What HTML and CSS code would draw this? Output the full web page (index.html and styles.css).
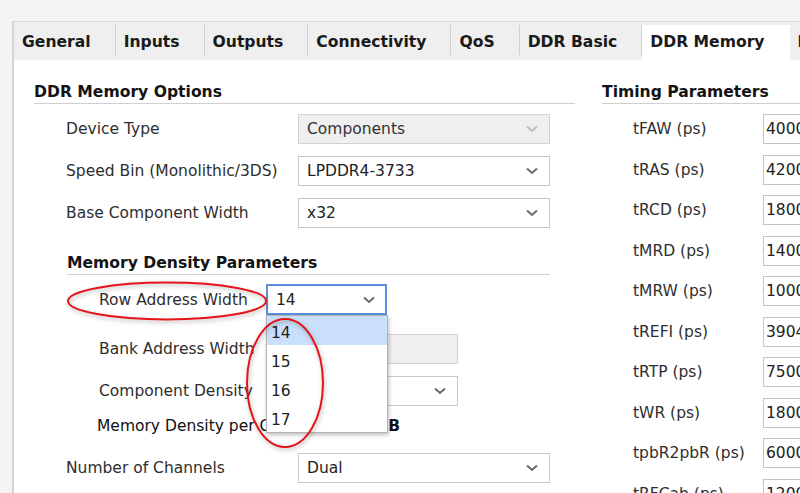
FILE: index.html
```html
<!DOCTYPE html>
<html>
<head>
<meta charset="utf-8">
<link rel="stylesheet" href="styles.css">
</head>
<body>
<div class="window">
  <div class="tabs">
    <div class="tab">General</div>
    <div class="tab">Inputs</div>
    <div class="tab">Outputs</div>
    <div class="tab">Connectivity</div>
    <div class="tab">QoS</div>
    <div class="tab">DDR Basic</div>
    <div class="tab active">DDR Memory</div>
    <div class="tab">DDR Advanced</div>
  </div>
  <div class="content">
    <div class="col-left">
      <div class="section-title">DDR Memory Options</div>
      <div class="row first">
        <span class="label">Device Type</span>
        <div class="select disabled"><span>Components</span><svg class="chev" width="12" height="8" viewBox="0 0 12 8"><polyline points="1,1.5 6,6 11,1.5"/></svg></div>
      </div>
      <div class="row">
        <span class="label">Speed Bin (Monolithic/3DS)</span>
        <div class="select"><span>LPDDR4-3733</span><svg class="chev" width="12" height="8" viewBox="0 0 12 8"><polyline points="1,1.5 6,6 11,1.5"/></svg></div>
      </div>
      <div class="row">
        <span class="label">Base Component Width</span>
        <div class="select"><span>x32</span><svg class="chev" width="12" height="8" viewBox="0 0 12 8"><polyline points="1,1.5 6,6 11,1.5"/></svg></div>
      </div>

      <div class="subsection">
        <div class="section-title sub-title">Memory Density Parameters</div>
        <div class="row sub-row row-addr">
          <span class="label sub-label">Row Address Width</span>
          <div class="select small focused"><span>14</span><svg class="chev" width="12" height="8" viewBox="0 0 12 8"><polyline points="1,1.5 6,6 11,1.5"/></svg>
            <ul class="dropdown">
              <li class="hl">14</li>
              <li>15</li>
              <li>16</li>
              <li>17</li>
            </ul>
          </div>
        </div>
        <div class="row sub-row row-bank">
          <span class="label sub-label">Bank Address Width</span>
          <div class="field disabled wide"><span>3</span></div>
        </div>
        <div class="row sub-row row-comp">
          <span class="label sub-label">Component Density</span>
          <div class="select wide"><span>8Gb</span><svg class="chev" width="12" height="8" viewBox="0 0 12 8"><polyline points="1,1.5 6,6 11,1.5"/></svg></div>
        </div>
        <div class="density-row">
          <span class="density-label">Memory Density per Channel</span>
          <span class="density-value">16GB</span>
        </div>
      </div>

      <div class="row channels">
        <span class="label">Number of Channels</span>
        <div class="select"><span>Dual</span><svg class="chev" width="12" height="8" viewBox="0 0 12 8"><polyline points="1,1.5 6,6 11,1.5"/></svg></div>
      </div>
    </div>

    <div class="col-right">
      <div class="section-title">Timing Parameters</div>
      <div class="timing-list">
        <div class="trow"><span class="tlabel">tFAW (ps)</span><div class="tinput">40000</div></div>
        <div class="trow"><span class="tlabel">tRAS (ps)</span><div class="tinput">42000</div></div>
        <div class="trow"><span class="tlabel">tRCD (ps)</span><div class="tinput">18000</div></div>
        <div class="trow"><span class="tlabel">tMRD (ps)</span><div class="tinput">14000</div></div>
        <div class="trow"><span class="tlabel">tMRW (ps)</span><div class="tinput">10000</div></div>
        <div class="trow"><span class="tlabel">tREFI (ps)</span><div class="tinput">3904000</div></div>
        <div class="trow"><span class="tlabel">tRTP (ps)</span><div class="tinput">7500</div></div>
        <div class="trow"><span class="tlabel">tWR (ps)</span><div class="tinput">18000</div></div>
        <div class="trow"><span class="tlabel">tpbR2pbR (ps)</span><div class="tinput">60000</div></div>
        <div class="trow"><span class="tlabel">tRFCab (ps)</span><div class="tinput">120000</div></div>
      </div>
    </div>
  </div>
</div>

<svg class="annot" width="800" height="493" viewBox="0 0 800 493">
  <ellipse cx="167" cy="301" rx="99" ry="18.5"/>
  <ellipse cx="285" cy="383" rx="38" ry="64"/>
</svg>
</body>
</html>
```

FILE: styles.css
```css
* { box-sizing: border-box; }

html, body {
  margin: 0;
  padding: 0;
}

body {
  width: 800px;
  height: 493px;
  overflow: hidden;
  background: #f4f4f4;
  font-family: "DejaVu Sans", sans-serif;
  font-size: 15.5px;
  color: #2e2e2e;
  position: relative;
}

.window {
  margin: 21px 0 0 12px;
  border-top: 1px solid #d9d9d9;
  border-left: 2px solid #d4d4d4;
  background: #ffffff;
  height: 472px;
  overflow: hidden;
}

/* Tabs */
.tabs {
  display: flex;
  align-items: flex-end;
  height: 38px;
  background: #efefef;
  white-space: nowrap;
}

.tab {
  position: relative;
  height: 35px;
  line-height: 34px;
  padding: 0 25px 0 8px;
  font-weight: bold;
  font-size: 15.6px;
  color: #1a1a1a;
  flex: none;
}

.tab + .tab::before {
  content: "";
  position: absolute;
  left: -1px;
  top: 0;
  height: 30px;
  border-left: 1px solid #cfcfcf;
}

.tab.active {
  background: #ffffff;
}

.tab.active + .tab::before {
  display: none;
}

/* Content */
.content {
  display: flex;
  gap: 27px;
  padding: 22px 0 0 20px;
}

.col-left {
  width: 541px;
  flex: none;
}

.col-right {
  flex: 1;
  min-width: 0;
}

.section-title {
  font-weight: bold;
  font-size: 15.6px;
  color: #141414;
  line-height: 20px;
  padding-bottom: 1px;
  border-bottom: 1px solid #d0d0d0;
  white-space: nowrap;
}

.row {
  display: flex;
  align-items: center;
  height: 30px;
  padding-left: 32px;
  margin-top: 12px;
}

.row.first {
  margin-top: 10px;
}

.label {
  width: 232px;
  flex: none;
  white-space: nowrap;
}

.select, .field {
  position: relative;
  width: 252px;
  height: 30px;
  border: 1px solid #c9c9c9;
  background: #ffffff;
  display: flex;
  align-items: center;
  justify-content: space-between;
  padding: 0 11px 0 8px;
  color: #222;
}

.select.disabled, .field.disabled {
  background: #efefef;
  border-color: #d2d2d2;
  color: #333;
}

.chev {
  flex: none;
}

.chev polyline {
  fill: none;
  stroke: #6a6a6a;
  stroke-width: 2;
}

.select.disabled .chev polyline {
  stroke: #bdbdbd;
}

/* Subsection */
.subsection {
  margin-left: 33px;
  margin-top: 25px;
}

.sub-title {
  width: 483px;
}

.sub-row {
  padding-left: 32px;
}

.sub-label {
  width: 167px;
}

.row-addr {
  margin-top: 9px;
  height: 31px;
}

.select.small {
  width: 121px;
  height: 31px;
  border: 2px solid #5e8fd8;
  padding: 0 10px 0 8px;
}

.select.wide, .field.wide {
  width: 192px;
}

.row-bank {
  margin-top: 19px;
}

.row-comp {
  margin-top: 12px;
}

.density-row {
  display: flex;
  justify-content: space-between;
  width: 303px;
  margin-left: 30px;
  margin-top: 10px;
  line-height: 20px;
  color: #111;
}

.density-value {
  font-weight: bold;
}

.row.channels {
  margin-top: 17px;
}

/* Dropdown list */
.dropdown {
  list-style: none;
  margin: 0;
  padding: 0;
  position: absolute;
  left: -2px;
  top: calc(100% + 2px);
  width: 122px;
  background: #ffffff;
  border: 1px solid #b4b4b4;
  box-shadow: 1px 2px 4px rgba(0, 0, 0, 0.25);
  z-index: 5;
}

.dropdown li {
  height: 29px;
  line-height: 34px;
  padding-left: 4px;
  color: #222;
  overflow: hidden;
}

.dropdown li.hl {
  background: #cadffa;
}

/* Timing */
.timing-list {
  display: flex;
  flex-direction: column;
  gap: 10.5px;
  margin-top: 10px;
}

.trow {
  display: flex;
  align-items: center;
  height: 30px;
  padding-left: 31px;
}

.tlabel {
  width: 130px;
  flex: none;
  white-space: nowrap;
}

.tinput {
  width: 80px;
  flex: none;
  height: 30px;
  line-height: 28px;
  border: 1px solid #c4c4c4;
  padding-left: 2px;
  color: #222;
  white-space: nowrap;
  overflow: hidden;
}

/* Annotation overlay */
.annot {
  position: absolute;
  left: 0;
  top: 0;
  pointer-events: none;
  z-index: 10;
  filter: drop-shadow(1px 2px 2px rgba(0, 0, 0, 0.3));
}

.annot ellipse {
  fill: none;
  stroke: #e5141a;
  stroke-width: 2;
}
```
